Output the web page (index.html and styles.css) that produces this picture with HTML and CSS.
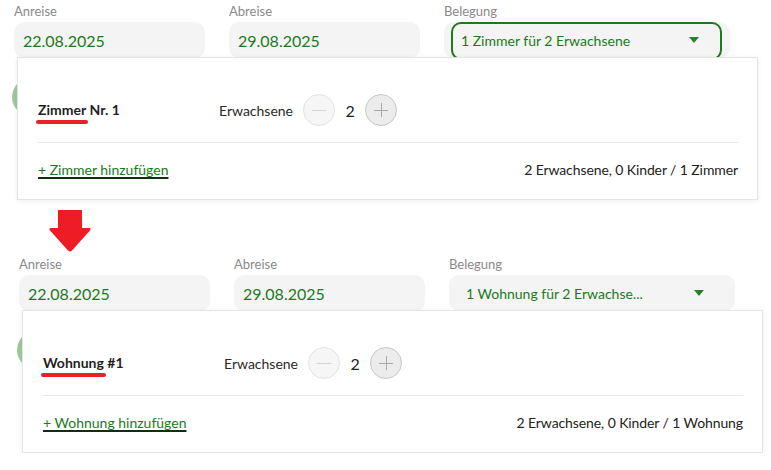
FILE: index.html
```html
<!DOCTYPE html>
<html lang="de">
<head>
<meta charset="utf-8">
<title>Belegung</title>
<link rel="stylesheet" href="styles.css">
</head>
<body>
<div class="page">
  <section class="booking booking-first">
    <div class="search-btn"></div>
    <div class="fields">
      <div class="field">
        <div class="label">Anreise</div>
        <div class="input">22.08.2025</div>
      </div>
      <div class="field">
        <div class="label">Abreise</div>
        <div class="input">29.08.2025</div>
      </div>
      <div class="field">
        <div class="label">Belegung</div>
        <div class="select">
          <div class="select-inner focused">
            <span class="select-text">1 Zimmer für 2 Erwachsene</span>
            <span class="caret"></span>
          </div>
        </div>
      </div>
    </div>
    <div class="panel">
      <div class="room-row">
        <div class="room-name"><span class="mark">Zimmer</span> Nr. 1</div>
        <div class="counter-label">Erwachsene</div>
        <button class="circle minus" type="button"><span class="sign"></span></button>
        <span class="count">2</span>
        <button class="circle plus" type="button"><span class="sign"></span></button>
      </div>
      <div class="divider"></div>
      <div class="panel-foot">
        <a class="add-link" href="#">+ Zimmer hinzufügen</a>
        <span class="summary">2 Erwachsene, 0 Kinder / 1 Zimmer</span>
      </div>
    </div>
  </section>

  <div class="arrow">
    <svg width="42" height="42" viewBox="0 0 42 42">
      <path d="M9 0 H33 V18 H40 Q43 18 40.5 21 L23 40.5 Q21 42.5 19 40.5 L1.5 21 Q-1 18 2 18 H9 Z" fill="#ee1c25"/>
    </svg>
  </div>

  <section class="booking booking-second">
    <div class="search-btn"></div>
    <div class="fields">
      <div class="field">
        <div class="label">Anreise</div>
        <div class="input">22.08.2025</div>
      </div>
      <div class="field">
        <div class="label">Abreise</div>
        <div class="input">29.08.2025</div>
      </div>
      <div class="field">
        <div class="label">Belegung</div>
        <div class="select">
          <div class="select-inner">
            <span class="select-text">1 Wohnung für 2 Erwachse...</span>
            <span class="caret"></span>
          </div>
        </div>
      </div>
    </div>
    <div class="panel">
      <div class="room-row">
        <div class="room-name"><span class="mark">Wohnung</span> #1</div>
        <div class="counter-label">Erwachsene</div>
        <button class="circle minus" type="button"><span class="sign"></span></button>
        <span class="count">2</span>
        <button class="circle plus" type="button"><span class="sign"></span></button>
      </div>
      <div class="divider"></div>
      <div class="panel-foot">
        <a class="add-link" href="#">+ Wohnung hinzufügen</a>
        <span class="summary">2 Erwachsene, 0 Kinder / 1 Wohnung</span>
      </div>
    </div>
  </section>
</div>
</body>
</html>
```

FILE: styles.css
```css
* { box-sizing: border-box; }

html, body {
  margin: 0;
  padding: 0;
  background: #ffffff;
}

body {
  font-family: Lato, "Open Sans", "Liberation Sans", sans-serif;
  color: #222;
}

.page {
  padding-top: 3px;
}

.booking {
  position: relative;
  z-index: 0;
}

.booking-first { padding-left: 14px; }
.booking-second { padding-left: 19px; }

.search-btn {
  position: absolute;
  z-index: -1;
  top: 75px;
  width: 120px;
  height: 38px;
  border-radius: 19px;
  background: #9ec89b;
}
.booking-first .search-btn { left: 12px; }
.booking-second .search-btn { left: 17px; }

.fields {
  display: grid;
  grid-template-columns: 191px 191px 286px;
  column-gap: 24px;
}

.label {
  font-size: 13px;
  line-height: 17px;
  color: #8a8a8a;
  margin-bottom: 2px;
}

.input {
  height: 36px;
  background: #f4f4f4;
  border-radius: 10px;
  padding-left: 9px;
  font-size: 16px;
  line-height: 38px;
  color: #1b7a1b;
}

.select {
  height: 36px;
  background: #f4f4f4;
  border-radius: 10px;
  padding: 0 8px 0 7px;
}

.select-inner {
  height: 38px;
  border: 2px solid transparent;
  border-radius: 10px;
  display: flex;
  align-items: center;
  padding: 0 21px 2px 8px;
}
.select-inner.focused {
  border-color: #1c7a1c;
}

.select-text {
  font-size: 14px;
  color: #1b7a1b;
  white-space: nowrap;
}

.caret {
  margin-left: auto;
  width: 0;
  height: 0;
  border-left: 5px solid transparent;
  border-right: 5px solid transparent;
  border-top: 6px solid #2a7f2a;
}

.panel {
  position: relative;
  margin-top: -1px;
  margin-left: 3px;
  width: 741px;
  height: 143px;
  background: #fff;
  border: 1px solid #e4e4e4;
  box-shadow: 0 1px 5px rgba(0, 0, 0, 0.07);
  padding: 36px 19px 0 20px;
}

.room-row {
  display: flex;
  align-items: center;
  height: 32px;
}

.room-name {
  width: 181px;
  font-size: 14px;
  font-weight: 700;
  color: #1f1f1f;
  position: relative;
  top: -1px;
}

.mark {
  position: relative;
}
.mark::after {
  content: "";
  position: absolute;
  left: -2px;
  right: -2px;
  bottom: -6px;
  height: 4px;
  border-radius: 2px;
  background: #e8202a;
}

.counter-label {
  font-size: 14px;
  color: #2a2a2a;
  margin-right: 10px;
}

.circle {
  width: 32px;
  height: 32px;
  border-radius: 50%;
  padding: 0;
  margin: 0;
  position: relative;
  cursor: pointer;
}
.circle.minus {
  background: #f6f6f6;
  border: 1px solid #e2e2e2;
}
.circle.plus {
  background: #ececec;
  border: 1px solid #c6c6c6;
}

.sign {
  position: absolute;
  left: 50%;
  top: 50%;
  width: 14px;
  height: 1px;
  margin-left: -7px;
  margin-top: -0.5px;
}
.minus .sign { background: #d6d6d6; }
.plus .sign { background: #a8a8a8; }
.plus .sign::after {
  content: "";
  position: absolute;
  left: 6.5px;
  top: -6.5px;
  width: 1px;
  height: 14px;
  background: #a8a8a8;
}

.count {
  width: 30px;
  text-align: center;
  font-size: 16px;
  color: #222;
}

.divider {
  height: 1px;
  background: #e6e6e6;
  margin-top: 16px;
}

.panel-foot {
  display: flex;
  justify-content: space-between;
  align-items: center;
  margin-top: 16px;
  height: 20px;
  font-size: 14px;
}

.add-link {
  color: #1b7a1b;
  text-decoration: underline;
  text-decoration-color: #0f2f0f;
  text-decoration-thickness: 2px;
  text-underline-offset: 2px;
  text-decoration-skip-ink: none;
}

.summary {
  color: #222;
  letter-spacing: -0.1px;
}

.arrow {
  margin: 10px 0 3px 49px;
  height: 43px;
}
.arrow svg { display: block; }
```
